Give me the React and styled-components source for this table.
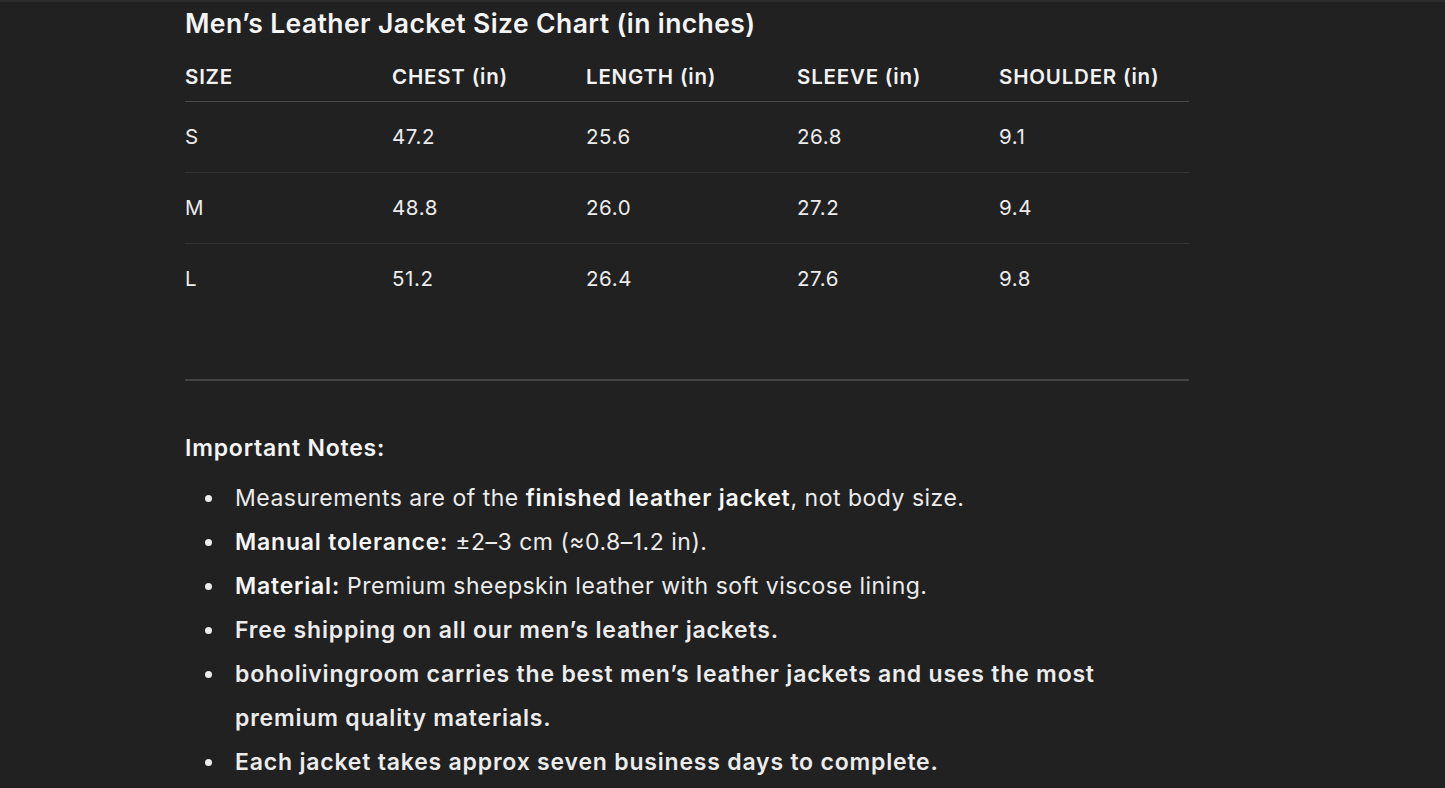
import React from "react";
import styled, { createGlobalStyle } from "styled-components";

const Global = createGlobalStyle`
  html, body { margin: 0; padding: 0; background: #212121; }
  body { font-family: Inter, "Noto Sans", "Liberation Sans", sans-serif; color: #f2f2f2; -webkit-font-smoothing: antialiased; }
`;

const Page = styled.div`
  min-height: 788px;
  border-top: 2px solid #2c2c2c;
  box-sizing: border-box;
  padding: 5px 0 0 185px;
`;

const Content = styled.div`
  width: 1004px;
`;

const Title = styled.h2`
  margin: 0;
  font-size: 26.5px;
  line-height: 32px;
  font-weight: 600;
  color: #f4f4f4;
  letter-spacing: 0.4px;
`;

const Table = styled.div`
  margin-top: 14px;
  display: grid;
  grid-template-columns: 207px 194px 211px 202px 1fr;
`;

const Row = styled.div`
  display: contents;
`;

const HeadCell = styled.div`
  height: 47px;
  padding-bottom: 1px;
  display: flex;
  align-items: center;
  font-size: 20.5px;
  font-weight: 600;
  color: #f2f2f2;
  border-bottom: 1px solid #4a4a4a;
  letter-spacing: 0.8px;
`;

const Cell = styled.div`
  height: 69px;
  padding-bottom: 1px;
  display: flex;
  align-items: center;
  font-size: 20.5px;
  font-weight: 400;
  color: #ececec;
  letter-spacing: 0.6px;
  border-bottom: 1px solid ${(p) => (p.$last ? "transparent" : "#333333")};
`;

const Rule = styled.hr`
  margin: 64px 0 0;
  border: 0;
  height: 2px;
  background: #444444;
`;

const NotesTitle = styled.h3`
  margin: 51px 0 0;
  font-size: 23px;
  line-height: 32px;
  font-weight: 600;
  color: #f4f4f4;
  letter-spacing: 0.8px;
`;

const List = styled.ul`
  margin: 12px 0 0;
  padding-left: 50px;
  list-style: none;
`;

const Item = styled.li`
  position: relative;
  font-size: 23px;
  line-height: 44px;
  color: #ececec;
  letter-spacing: ${(p) => (p.$bold ? "0.8px" : "0.5px")};
  font-weight: ${(p) => (p.$bold ? 600 : 400)};
  &::before {
    content: "";
    position: absolute;
    left: -30px;
    top: 19px;
    width: 7px;
    height: 7px;
    border-radius: 50%;
    background: #ececec;
  }
  b { font-weight: 600; color: #f6f6f6; letter-spacing: 0.8px; }
`;

const headers = ["SIZE", "CHEST (in)", "LENGTH (in)", "SLEEVE (in)", "SHOULDER (in)"];
const rows = [
  ["S", "47.2", "25.6", "26.8", "9.1"],
  ["M", "48.8", "26.0", "27.2", "9.4"],
  ["L", "51.2", "26.4", "27.6", "9.8"],
];

export default function App() {
  return (
    <>
      <Global />
      <Page>
        <Content>
          <Title>Men’s Leather Jacket Size Chart (in inches)</Title>
          <Table>
            <Row>
              {headers.map((h) => (
                <HeadCell key={h}>{h}</HeadCell>
              ))}
            </Row>
            {rows.map((r, i) => (
              <Row key={r[0]}>
                {r.map((c, j) => (
                  <Cell key={j} $last={i === rows.length - 1}>{c}</Cell>
                ))}
              </Row>
            ))}
          </Table>
          <Rule />
          <NotesTitle>Important Notes:</NotesTitle>
          <List>
            <Item>
              Measurements are of the <b>finished leather jacket</b>, not body size.
            </Item>
            <Item>
              <b>Manual tolerance:</b> ±2–3 cm (≈0.8–1.2 in).
            </Item>
            <Item>
              <b>Material:</b> Premium sheepskin leather with soft viscose lining.
            </Item>
            <Item $bold>Free shipping on all our men’s leather jackets.</Item>
            <Item $bold>
              boholivingroom carries the best men’s leather jackets and uses the most premium quality materials.
            </Item>
            <Item $bold>Each jacket takes approx seven business days to complete.</Item>
          </List>
        </Content>
      </Page>
    </>
  );
}
